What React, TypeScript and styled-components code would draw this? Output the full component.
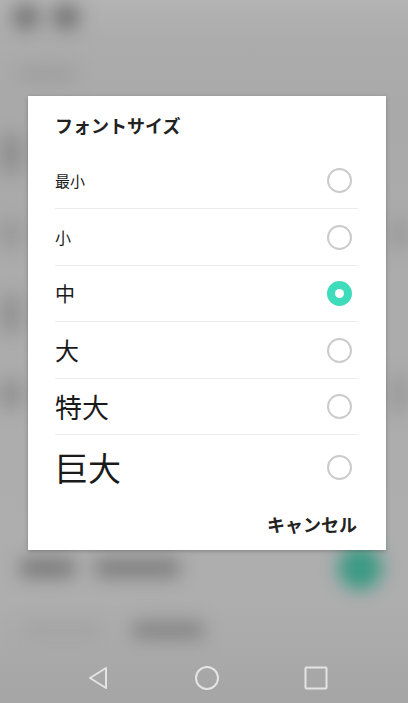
import React from "react";
import styled, { createGlobalStyle } from "styled-components";

const GlobalStyle = createGlobalStyle`
  html, body {
    margin: 0;
    padding: 0;
    width: 408px;
    height: 703px;
    overflow: hidden;
    background: #acacac;
  }
  * { box-sizing: border-box; }
`;

const Screen = styled.div`
  position: relative;
  width: 408px;
  height: 703px;
  overflow: hidden;
  background: linear-gradient(#b3b3b3 0px, #acacac 40px, #a9a9a9 110px, #acacac 300px, #aeaeae 600px, #a9a9a9 660px, #a5a5a5 703px);
  font-family: "Noto Sans CJK JP", "Noto Sans", sans-serif;
`;

// blurred settings page lying behind the dialog
const Backdrop = styled.div`
  position: absolute;
  inset: 0;
  filter: blur(9px);
  display: flex;
  flex-direction: column;
`;

const BgRow = styled.div<{ h: number; pad?: string; gap?: number }>`
  height: ${(p) => p.h}px;
  flex-shrink: 0;
  display: flex;
  align-items: center;
  gap: ${(p) => p.gap ?? 20}px;
  padding: ${(p) => p.pad ?? "0 18px"};
`;

const Bar = styled.div<{ w: number; h?: number; c: string; round?: boolean }>`
  width: ${(p) => p.w}px;
  height: ${(p) => p.h ?? 16}px;
  background: ${(p) => p.c};
  border-radius: ${(p) => (p.round ? "50%" : "6px")};
  flex-shrink: 0;
`;

const Spacer = styled.div`
  flex: 1;
`;

const Overlay = styled.div`
  position: absolute;
  inset: 0;
  display: flex;
  flex-direction: column;
`;

const DialogArea = styled.div`
  flex: 1;
  padding: 96px 22px 0 28px;
`;

const Dialog = styled.div`
  width: 358px;
  height: 454px;
  background: #fff;
  box-shadow: 0 1px 4px rgba(0, 0, 0, 0.25);
  padding: 0 28px 0 27px;
  display: flex;
  flex-direction: column;
`;

const Title = styled.div`
  height: 56px;
  display: flex;
  align-items: center;
  padding-top: 2px;
  font-size: 18px;
  font-weight: 700;
  color: #222;
`;

const Row = styled.div<{ h: number; last?: boolean }>`
  height: ${(p) => p.h}px;
  display: flex;
  align-items: center;
  justify-content: space-between;
  border-bottom: ${(p) => (p.last ? "none" : "1px solid #ececec")};
`;

const Label = styled.span<{ size: number }>`
  font-size: ${(p) => p.size}px;
  color: #1a1a1a;
  line-height: 1;
`;

const Radio = styled.span<{ checked?: boolean }>`
  width: 25px;
  height: 25px;
  margin-right: 6px;
  border-radius: 50%;
  display: flex;
  align-items: center;
  justify-content: center;
  border: ${(p) => (p.checked ? "none" : "2px solid #cbcbcb")};
  background: ${(p) => (p.checked ? "#3fdcbb" : "transparent")};

  &::after {
    content: "";
    display: ${(p) => (p.checked ? "block" : "none")};
    width: 9px;
    height: 9px;
    border-radius: 50%;
    background: #fff;
  }
`;

const Footer = styled.div`
  flex: 1;
  display: flex;
  align-items: center;
  justify-content: flex-end;
  padding: 0 1px 2px 0;
`;

const CancelButton = styled.button`
  border: none;
  background: none;
  padding: 0;
  font-family: inherit;
  font-size: 18px;
  font-weight: 700;
  color: #222;
`;

const NavBar = styled.div`
  height: 44px;
  display: flex;
  align-items: center;
  justify-content: space-between;
  padding: 0 80px 6px 86px;
`;

const NavIcon = styled.svg`
  width: 24px;
  height: 24px;
  fill: none;
  stroke: #e4e4e4;
  stroke-width: 2;
  stroke-linejoin: round;
`;

const options = [
  { label: "最小", size: 15, h: 57 },
  { label: "小", size: 16, h: 57 },
  { label: "中", size: 20, h: 56, checked: true },
  { label: "大", size: 24, h: 57 },
  { label: "特大", size: 27, h: 56 },
  { label: "巨大", size: 33, h: 65, last: true },
];

export default function App() {
  return (
    <Screen>
      <GlobalStyle />
      <Backdrop>
        <BgRow h={34} pad="0 12px" gap={12}>
          <Bar w={28} h={26} c="#777" round />
          <Bar w={28} h={26} c="#747474" round />
        </BgRow>
        <BgRow h={80}>
          <Bar w={58} h={12} c="#9b9b9b" />
        </BgRow>
        <BgRow h={80} pad="0">
          <Bar w={22} h={40} c="#8f8f8f" />
        </BgRow>
        <BgRow h={80} pad="0">
          <Bar w={22} h={30} c="#999" />
          <Spacer />
          <Bar w={18} h={30} c="#9a9a9a" />
        </BgRow>
        <BgRow h={80} pad="0">
          <Bar w={22} h={40} c="#939393" />
        </BgRow>
        <BgRow h={80} pad="0">
          <Bar w={22} h={30} c="#919191" />
          <Spacer />
          <Bar w={18} h={40} c="#9a9a9a" />
        </BgRow>
        <BgRow h={114} />
        <BgRow h={40} pad="0 26px 0 20px">
          <Bar w={55} h={18} c="#777" />
          <Bar w={85} h={18} c="#7c7c7c" />
          <Spacer />
          <Bar w={44} h={44} c="#3a9a84" round />
        </BgRow>
        <BgRow h={84} pad="0 22px" gap={30}>
          <Bar w={80} h={14} c="#a2a2a2" />
          <Bar w={72} h={18} c="#858585" />
        </BgRow>
      </Backdrop>
      <Overlay>
        <DialogArea>
          <Dialog>
            <Title>フォントサイズ</Title>
            {options.map((o) => (
              <Row key={o.label} h={o.h} last={o.last}>
                <Label size={o.size}>{o.label}</Label>
                <Radio checked={o.checked} />
              </Row>
            ))}
            <Footer>
              <CancelButton>キャンセル</CancelButton>
            </Footer>
          </Dialog>
        </DialogArea>
        <NavBar>
          <NavIcon viewBox="0 0 24 24">
            <path d="M20 2 L4 12 L20 22 Z" />
          </NavIcon>
          <NavIcon viewBox="0 0 24 24">
            <circle cx="12" cy="12" r="11" />
          </NavIcon>
          <NavIcon viewBox="0 0 24 24">
            <rect x="1.5" y="1.5" width="21" height="21" rx="1" />
          </NavIcon>
        </NavBar>
      </Overlay>
    </Screen>
  );
}
